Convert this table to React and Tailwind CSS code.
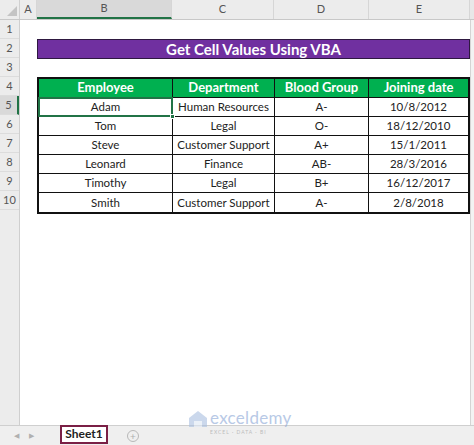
import React from "react";

const rows = [
  ["Adam", "Human Resources", "A-", "10/8/2012"],
  ["Tom", "Legal", "O-", "18/12/2010"],
  ["Steve", "Customer Support", "A+", "15/1/2011"],
  ["Leonard", "Finance", "AB-", "28/3/2016"],
  ["Timothy", "Legal", "B+", "16/12/2017"],
  ["Smith", "Customer Support", "A-", "2/8/2018"],
];

const cols = [
  { l: "A", w: "w-[17px]" },
  { l: "B", w: "w-[135px]" },
  { l: "C", w: "w-[102px]" },
  { l: "D", w: "w-[95px]" },
  { l: "E", w: "w-[101px]" },
];

const cellW = ["w-[134px] border-r", "w-[102px] border-r", "w-[94px] border-r", "w-[99px]"];

export default function App() {
  const rowNums = [1, 2, 3, 4, 5, 6, 7, 8, 9, 10];
  return (
    <div className="relative w-[474px] h-[445px] overflow-hidden bg-white flex flex-col font-['Lato','Noto_Sans',sans-serif] text-[#222]">
      {/* column headers */}
      <div className="flex h-[20px] bg-[#ececec] border-b border-[#c8c8c8] shrink-0">
        <div className="w-[20px] h-full border-r border-[#d0d0d0] relative">
          <div className="absolute right-[2px] bottom-[3px] w-0 h-0 border-l-[10px] border-l-transparent border-b-[10px] border-b-[#c4c4c4]" />
        </div>
        {cols.map((c) => (
          <div
            key={c.l}
            className={`${c.w} h-full flex items-center justify-center text-[11px] text-[#555] border-r border-[#d6d6d6] ${c.l === "B" ? "bg-[#d9d9d9] border-b-2 border-b-[#217346]" : ""}`}
          >
            {c.l}
          </div>
        ))}
        <div className="flex-1 bg-[#e8e8e8]" />
      </div>

      <div className="flex flex-1 min-h-0">
        {/* row headers */}
        <div className="w-[20px] bg-[#ececec] border-r border-[#cfcfcf] flex flex-col shrink-0">
          {rowNums.map((n) => (
            <div
              key={n}
              className={`h-[19px] flex items-center justify-center text-[11px] text-[#555] border-b border-[#dcdcdc] ${n === 5 ? "bg-[#d9d9d9] border-r-2 border-r-[#217346]" : ""}`}
            >
              {n}
            </div>
          ))}
        </div>

        {/* sheet */}
        <div className="flex-1 flex">
          <div className="w-[17px] shrink-0" />
          <div className="w-[433px] shrink-0 flex flex-col">
            <div className="h-[19px]" />
            <div className="h-[20px] bg-[#7030a0] border border-[#2e1840] flex items-center justify-center text-white font-bold text-[15px]">
              Get Cell Values Using VBA
            </div>
            <div className="h-[18px]" />
            <div className="w-[433px] border-2 border-[#111] flex flex-col">
              <div className="h-[19px] bg-[#00b050] text-white font-bold text-[13px] flex border-b border-[#111]">
                {["Employee", "Department", "Blood Group", "Joining date"].map((h, j) => (
                  <div key={h} className={`${cellW[j]} border-[#111] flex items-center justify-center`}>
                    {h}
                  </div>
                ))}
              </div>
              {rows.map((r, i) => (
                <div
                  key={i}
                  className={`h-[19px] flex text-[11.5px] ${i < rows.length - 1 ? "border-b border-[#111]" : ""}`}
                >
                  {r.map((v, j) => (
                    <div
                      key={j}
                      className={`${cellW[j]} border-[#111] flex items-center justify-center ${i === 0 && j === 0 ? "relative" : ""}`}
                    >
                      {v}
                      {i === 0 && j === 0 && (
                        <>
                          <span className="absolute inset-[-1px] border-2 border-[#217346] pointer-events-none" />
                          <span className="absolute right-[-3px] bottom-[-3px] w-[5px] h-[5px] bg-[#217346] border border-white" />
                        </>
                      )}
                    </div>
                  ))}
                </div>
              ))}
            </div>
          </div>
          <div className="flex-1 border-l border-[#d4d4d4] bg-[#f3f3f3]" />
        </div>
      </div>

      {/* tab bar */}
      <div className="h-[20px] shrink-0 bg-[#efefef] border-t border-[#cfcfcf] flex items-center relative">
        <span className="ml-[14px] text-[7px] text-[#b0b0b0]">◀</span>
        <span className="ml-[10px] text-[7px] text-[#b0b0b0]">▶</span>
        <div className="ml-[26px] -mt-[3px] h-[19px] w-[48px] bg-white border-2 border-[#7a1f45] flex items-center justify-center text-[12px] font-bold text-[#222]">
          Sheet1
        </div>
        <div className="ml-[19px] w-[12px] h-[12px] rounded-full border border-[#b8b8b8] flex items-center justify-center text-[10px] leading-none text-[#b0b0b0]">
          +
        </div>
      </div>

      {/* watermark */}
      <div className="absolute left-[188px] top-[410px] flex items-start opacity-60 pointer-events-none">
        <svg width="20" height="18" viewBox="0 0 20 18">
          <path d="M10 1 L19 8 L19 17 L1 17 L1 8 Z" fill="#a9bfe0" />
          <path d="M6 17 L6 11 L14 11 L14 17 Z" fill="#dfe8f5" />
        </svg>
        <div className="ml-[2px] flex flex-col leading-none">
          <span className="text-[17px] text-[#8aa6d6] tracking-[0.3px] leading-[16px]">exceldemy</span>
          <span className="text-[5px] leading-[6px] text-[#9a9a9a] tracking-[1px] mt-[3px]">EXCEL · DATA · BI</span>
        </div>
      </div>
    </div>
  );
}
